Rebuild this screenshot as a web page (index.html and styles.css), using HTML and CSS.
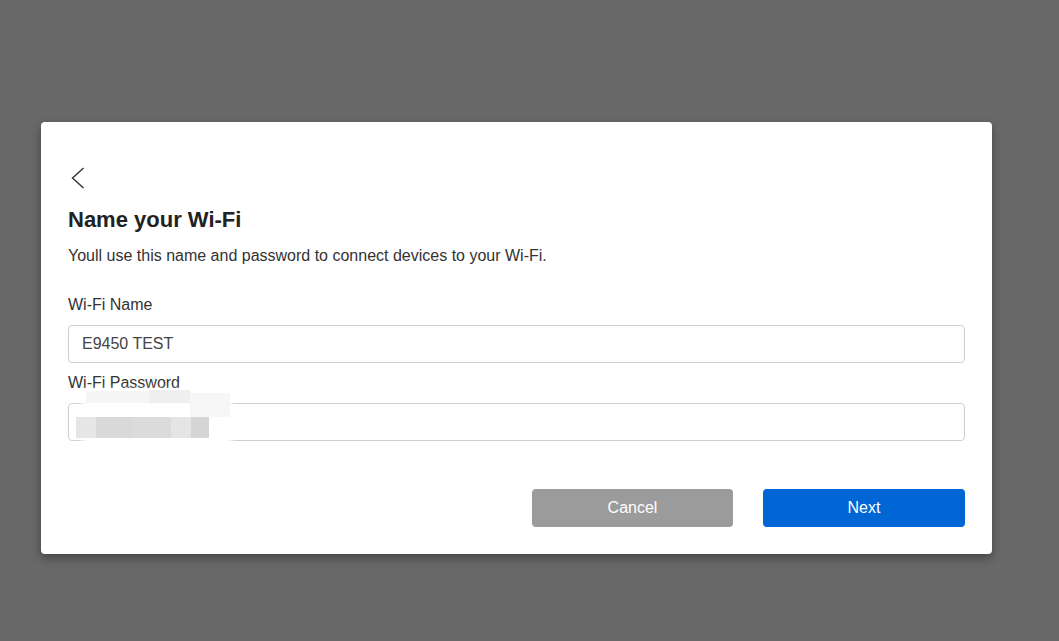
FILE: index.html
```html
<!DOCTYPE html>
<html lang="en">
<head>
<meta charset="utf-8">
<title>Name your Wi-Fi</title>
<link rel="stylesheet" href="styles.css">
</head>
<body>
<div class="dialog">
  <button class="back" aria-label="Back">
    <svg width="14" height="22" viewBox="0 0 14 22"><polyline points="12.5,1 1.5,11 12.5,21" fill="none" stroke="#333" stroke-width="1.4"/></svg>
  </button>
  <h1 class="title">Name your Wi-Fi</h1>
  <p class="subtitle">Youll use this name and password to connect devices to your Wi-Fi.</p>
  <label class="label">Wi-Fi Name</label>
  <input class="field" type="text" value="E9450 TEST">
  <label class="label">Wi-Fi Password</label>
  <div class="field-wrap">
    <input class="field" type="text" value="">
    <div class="mask">
      <span class="veil"></span>
      <span class="b t1"></span>
      <span class="b t2"></span>
      <span class="b t3"></span>
      <span class="b r1"></span>
      <span class="b r2"></span>
      <span class="b r3"></span>
      <span class="b r4"></span>
      <span class="b r5"></span>
    </div>
  </div>
  <div class="actions">
    <button class="btn cancel">Cancel</button>
    <button class="btn next">Next</button>
  </div>
</div>
</body>
</html>
```

FILE: styles.css
```css
html, body {
  margin: 0;
  padding: 0;
  height: 100%;
}
body {
  background: #686868;
  font-family: "Liberation Sans", Arial, sans-serif;
  color: #222;
  overflow: hidden;
}
.dialog {
  margin: 122px 0 0 41px;
  width: 951px;
  box-sizing: border-box;
  background: #fff;
  border-radius: 4px;
  padding: 45px 27px 27px 27px;
  box-shadow: 0 4px 10px rgba(0,0,0,0.35);
  display: flex;
  flex-direction: column;
}
.back {
  background: none;
  border: 0;
  padding: 0;
  margin: 0 0 0 3px;
  width: 14px;
  height: 22px;
  display: block;
  cursor: pointer;
}
.back svg { display: block; }
.title {
  margin: 18px 0 0 0;
  font-size: 22px;
  line-height: 26px;
  font-weight: bold;
  color: #222;
}
.subtitle {
  margin: 13px 0 0 0;
  font-size: 16px;
  line-height: 20px;
  color: #333;
}
.label {
  display: block;
  margin-top: 29px;
  font-size: 16px;
  line-height: 20px;
  color: #333;
}
.label + .field,
.label + .field-wrap {
  margin-top: 10px;
}
.field + .label {
  margin-top: 10px;
}
.field {
  display: block;
  width: 100%;
  box-sizing: border-box;
  height: 38px;
  border: 1px solid #cfcfcf;
  border-radius: 4px;
  padding: 0 13px;
  font-family: "Liberation Sans", Arial, sans-serif;
  font-size: 16px;
  line-height: 20px;
  color: #444;
  background: #fff;
  outline: none;
}
.field-wrap {
  position: relative;
}
.mask {
  position: absolute;
  left: 0;
  top: 0;
  width: 180px;
  height: 60px;
  pointer-events: none;
}
.mask span {
  position: absolute;
  display: block;
}
.mask .veil {
  left: 14px;
  top: -13px;
  width: 150px;
  height: 64px;
  background: #fff;
  filter: blur(3px);
}
.mask .b {
  filter: blur(0.6px);
}
.mask .t1 { left: 18px; top: -12px; width: 64px; height: 12px; background: #f5f5f5; }
.mask .t2 { left: 82px; top: -13px; width: 40px; height: 13px; background: #efefef; }
.mask .t3 { left: 122px; top: -10px; width: 40px; height: 24px; background: #f6f6f6; }
.mask .r1 { left: 8px;  top: 14px; width: 20px; height: 21px; background: #e6e6e6; }
.mask .r2 { left: 28px; top: 14px; width: 36px; height: 21px; background: #d9d9d9; }
.mask .r3 { left: 64px; top: 14px; width: 39px; height: 21px; background: #dbdbdb; }
.mask .r4 { left: 103px; top: 14px; width: 20px; height: 21px; background: #e5e5e5; }
.mask .r5 { left: 123px; top: 14px; width: 18px; height: 21px; background: #d5d5d5; }
.actions {
  display: flex;
  justify-content: flex-end;
  gap: 30px;
  margin-top: 48px;
}
.btn {
  height: 38px;
  border: 0;
  border-radius: 4px;
  color: #fff;
  font-family: "Liberation Sans", Arial, sans-serif;
  font-size: 16px;
  cursor: pointer;
}
.cancel {
  width: 201px;
  background: #9b9b9b;
}
.next {
  width: 202px;
  background: #0066d6;
}
```
